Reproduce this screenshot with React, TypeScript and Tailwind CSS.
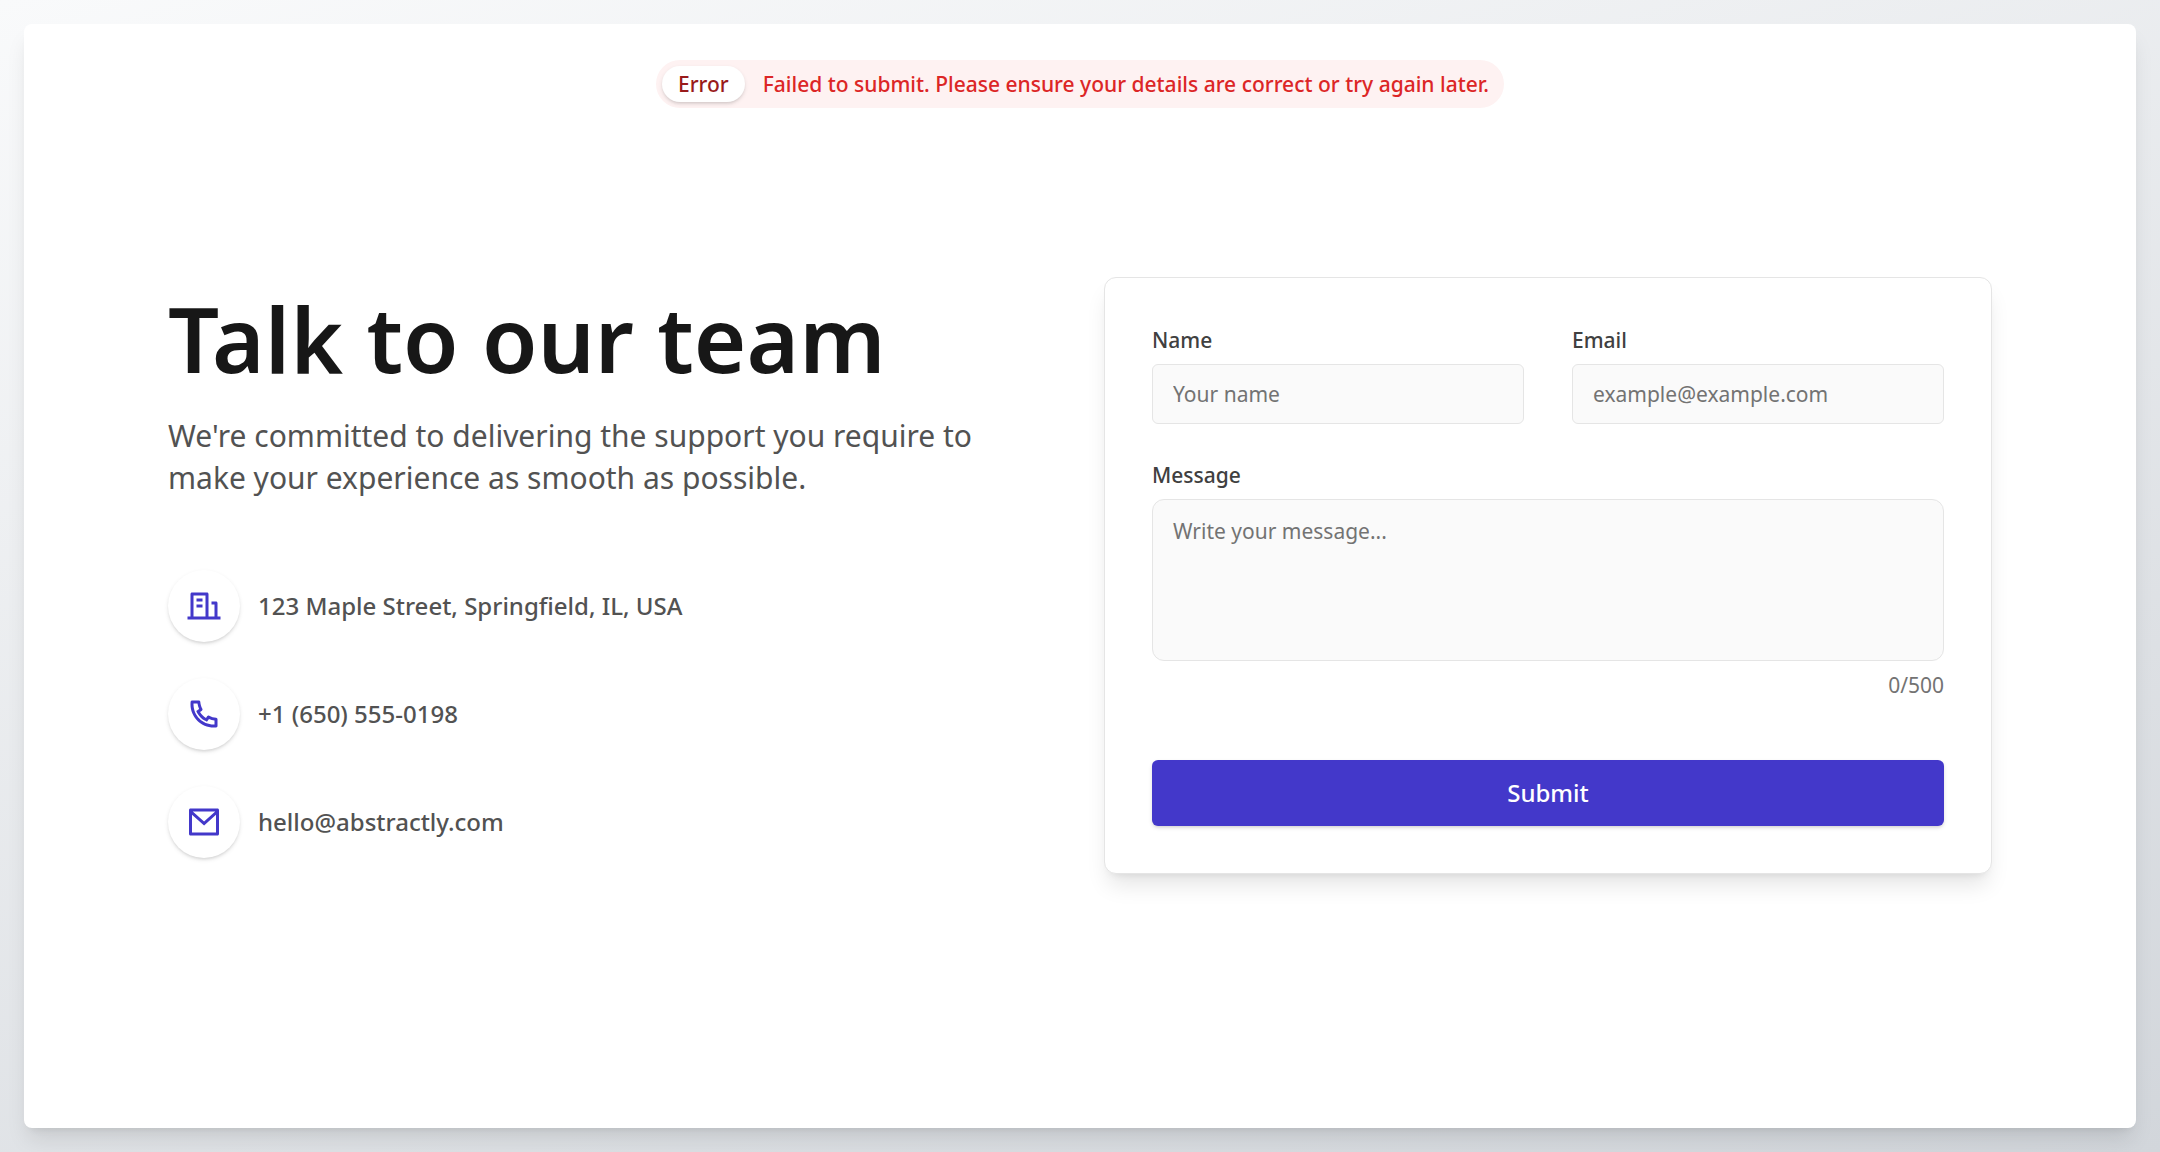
import { useState } from "react";
import { RiBuildingLine, RiMailLine, RiPhoneLine } from "react-icons/ri";

const contacts = [
  { icon: RiBuildingLine, text: "123 Maple Street, Springfield, IL, USA" },
  { icon: RiPhoneLine, text: "+1 (650) 555-0198", href: "tel:+16505550198" },
  { icon: RiMailLine, text: "hello@abstractly.com", href: "mailto:hello@abstractly.com" },
];

const MAX_LENGTH = 500;

const labelClass = "text-[21px] leading-[30px] font-medium text-[#404040]";
const fieldClass =
  "w-full border border-[#e5e5e5] bg-[#fafafa] px-5 text-[21px] leading-[30px] text-[#171717] placeholder:text-[#737373] outline-none focus:border-[#4338ca]";

function ErrorToast() {
  return (
    <div className="absolute inset-x-0 top-9 flex justify-center">
      <div
        role="alert"
        className="flex items-center gap-[18px] rounded-full bg-[#fef2f2] py-1.5 pr-[15px] pl-1.5 text-[21px] leading-[30px] font-medium"
      >
        <span className="rounded-full bg-white px-4 py-[3px] text-[#991b1b] shadow-[0_2px_4px_0_rgba(0,0,0,0.1),0_2px_3px_-1px_rgba(0,0,0,0.1)]">
          Error
        </span>
        <span className="text-[#dc2626]">
          Failed to submit. Please ensure your details are correct or try again later.
        </span>
      </div>
    </div>
  );
}

function Intro() {
  return (
    <section>
      <h1 className="text-[90px] leading-[90px] font-semibold text-[#171717]">Talk to our team</h1>
      <p className="mt-8 text-[30px] leading-[42px] text-[#525252]">
        We're committed to delivering the support you require to make your experience as smooth as
        possible.
      </p>
      <ul className="mt-[71px] flex flex-col gap-9">
        {contacts.map(({ icon: Icon, text, href }) => (
          <li key={text} className="flex items-center gap-[18px]">
            <span className="flex size-[72px] shrink-0 items-center justify-center rounded-full bg-white text-[#4338ca] shadow-[0_2px_4px_0_rgba(0,0,0,0.1),0_2px_3px_-1px_rgba(0,0,0,0.1)]">
              <Icon className="size-9" aria-hidden="true" />
            </span>
            <span className="text-2xl leading-9 font-medium text-[#525252]">
              {href ? <a href={href}>{text}</a> : text}
            </span>
          </li>
        ))}
      </ul>
    </section>
  );
}

function ContactForm() {
  const [message, setMessage] = useState("");
  return (
    <form
      noValidate
      onSubmit={(event) => event.preventDefault()}
      className="flex flex-col rounded-xl border border-[#e5e5e5] bg-white p-[47px] shadow-[0_15px_22px_-4px_rgba(0,0,0,0.1),0_6px_9px_-6px_rgba(0,0,0,0.1)]"
    >
      <div className="grid gap-x-12 gap-y-9 md:grid-cols-2">
        <div className="flex flex-col gap-[9px]">
          <label htmlFor="name" className={labelClass}>
            Name
          </label>
          <input
            id="name"
            type="text"
            placeholder="Your name"
            className={`${fieldClass} rounded-md py-3.5`}
          />
        </div>
        <div className="flex flex-col gap-[9px]">
          <label htmlFor="email" className={labelClass}>
            Email
          </label>
          <input
            id="email"
            type="email"
            placeholder="example@example.com"
            className={`${fieldClass} rounded-md py-3.5`}
          />
        </div>
        <div className="flex flex-col gap-[9px] md:col-span-2">
          <label htmlFor="message" className={labelClass}>
            Message
          </label>
          <textarea
            id="message"
            maxLength={MAX_LENGTH}
            value={message}
            onChange={(event) => setMessage(event.target.value)}
            placeholder="Write your message..."
            className={`${fieldClass} h-[162px] resize-none rounded-xl py-4`}
          />
          <span className="text-right text-[21px] leading-[30px] text-[#737373]">
            {message.length}/{MAX_LENGTH}
          </span>
        </div>
      </div>
      <button
        type="submit"
        className="mt-[60px] rounded-md bg-[#4338ca] py-[15px] text-2xl leading-9 font-medium text-white shadow-[0_2px_4px_0_rgba(0,0,0,0.1),0_2px_3px_-1px_rgba(0,0,0,0.1)]"
      >
        Submit
      </button>
    </form>
  );
}

export default function App() {
  return (
    <div className="flex min-h-screen bg-[linear-gradient(163deg,#f9fafb,#d2d6db)] p-6 font-['Noto_Sans',sans-serif]">
      <main className="relative flex flex-1 items-center rounded-lg bg-white px-6 pt-36 pb-[145px] shadow-[0_15px_22px_-4px_rgba(0,0,0,0.1),0_6px_9px_-6px_rgba(0,0,0,0.1)] lg:px-36">
        <ErrorToast />
        <div className="grid w-full items-center gap-12 lg:grid-cols-2">
          <Intro />
          <ContactForm />
        </div>
      </main>
    </div>
  );
}
